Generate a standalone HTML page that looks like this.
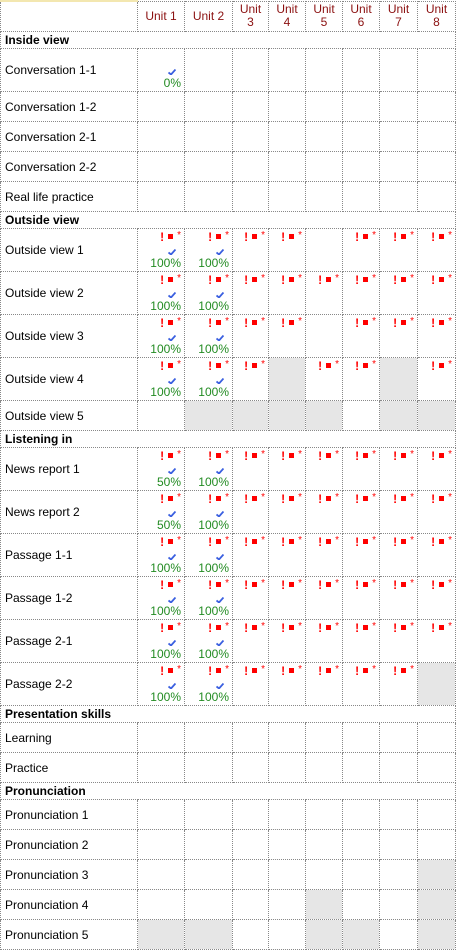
<!DOCTYPE html>
<html><head><meta charset="utf-8"><style>
body{margin:0;background:#fff;font-family:"Liberation Sans",sans-serif;}
table{border-collapse:collapse;table-layout:fixed;width:456px;position:absolute;left:0;top:0;}
td{border:1px dotted #888;padding:0;font-size:12px;color:#000;vertical-align:top;text-align:right;overflow:hidden;}
td.l{text-align:left;padding-left:4px;vertical-align:middle;}
tr.h td{height:29px;color:#8b1010;text-align:center;vertical-align:middle;line-height:13px;}
tr.h td:first-child,tr.s td{border-top:none}
tr.s td{height:16px;line-height:16px;font-weight:bold;text-align:left;padding-left:4px;vertical-align:middle;}
tr.b td{height:42px}
tr.t td{height:29px}
td.g{background:#e6e6e6}
.i{color:#f00;font-size:12px;height:13px;line-height:13px;padding-right:3px;padding-top:2px;font-weight:bold;overflow:hidden}
.i b{display:inline-block;width:5px;height:5px;background:#f00;margin:0 4px 0 4px;vertical-align:2px}
.i s{text-decoration:none;font-size:10px;line-height:10px;vertical-align:3px;font-weight:normal}
.k{height:12px;line-height:12px;padding-right:8px;padding-top:1px;overflow:hidden}
.p{color:#228b22;height:13px;line-height:13px;padding-right:3px}
</style></head><body>
<table>
<colgroup><col style="width:137px"><col style="width:47px"><col style="width:48px"><col style="width:36px"><col style="width:37px"><col style="width:37px"><col style="width:37px"><col style="width:38px"><col style="width:38px"></colgroup>
<tr class="h"><td style="border-top:2px solid #f3e7b0"></td><td>Unit 1</td><td>Unit 2</td><td>Unit<br>3</td><td>Unit<br>4</td><td>Unit<br>5</td><td>Unit<br>6</td><td>Unit<br>7</td><td>Unit<br>8</td></tr>
<tr class="s"><td colspan="9">Inside view</td></tr>
<tr class="b"><td class="l">Conversation 1-1</td><td><div style="height:15px"></div><div class="k"><svg width="8" height="6"><path d="M0.5 3.5L3 5.5L7.5 0.5" stroke="#3a5fe0" stroke-width="1.8" fill="none"/></svg></div><div class="p">0%</div></td><td></td><td></td><td></td><td></td><td></td><td></td><td></td></tr>
<tr class="t"><td class="l">Conversation 1-2</td><td></td><td></td><td></td><td></td><td></td><td></td><td></td><td></td></tr>
<tr class="t"><td class="l">Conversation 2-1</td><td></td><td></td><td></td><td></td><td></td><td></td><td></td><td></td></tr>
<tr class="t"><td class="l">Conversation 2-2</td><td></td><td></td><td></td><td></td><td></td><td></td><td></td><td></td></tr>
<tr class="t"><td class="l">Real life practice</td><td></td><td></td><td></td><td></td><td></td><td></td><td></td><td></td></tr>
<tr class="s"><td colspan="9">Outside view</td></tr>
<tr class="b"><td class="l">Outside view 1</td>
<td><div class="i">!<b></b><s>*</s></div><div class="k"><svg width="8" height="6"><path d="M0.5 3.5L3 5.5L7.5 0.5" stroke="#3a5fe0" stroke-width="1.8" fill="none"/></svg></div><div class="p">100%</div></td>
<td><div class="i">!<b></b><s>*</s></div><div class="k"><svg width="8" height="6"><path d="M0.5 3.5L3 5.5L7.5 0.5" stroke="#3a5fe0" stroke-width="1.8" fill="none"/></svg></div><div class="p">100%</div></td>
<td><div class="i">!<b></b><s>*</s></div></td><td><div class="i">!<b></b><s>*</s></div></td><td></td><td><div class="i">!<b></b><s>*</s></div></td><td><div class="i">!<b></b><s>*</s></div></td><td><div class="i">!<b></b><s>*</s></div></td></tr>
<tr class="b"><td class="l">Outside view 2</td>
<td><div class="i">!<b></b><s>*</s></div><div class="k"><svg width="8" height="6"><path d="M0.5 3.5L3 5.5L7.5 0.5" stroke="#3a5fe0" stroke-width="1.8" fill="none"/></svg></div><div class="p">100%</div></td>
<td><div class="i">!<b></b><s>*</s></div><div class="k"><svg width="8" height="6"><path d="M0.5 3.5L3 5.5L7.5 0.5" stroke="#3a5fe0" stroke-width="1.8" fill="none"/></svg></div><div class="p">100%</div></td>
<td><div class="i">!<b></b><s>*</s></div></td><td><div class="i">!<b></b><s>*</s></div></td><td><div class="i">!<b></b><s>*</s></div></td><td><div class="i">!<b></b><s>*</s></div></td><td><div class="i">!<b></b><s>*</s></div></td><td><div class="i">!<b></b><s>*</s></div></td></tr>
<tr class="b"><td class="l">Outside view 3</td>
<td><div class="i">!<b></b><s>*</s></div><div class="k"><svg width="8" height="6"><path d="M0.5 3.5L3 5.5L7.5 0.5" stroke="#3a5fe0" stroke-width="1.8" fill="none"/></svg></div><div class="p">100%</div></td>
<td><div class="i">!<b></b><s>*</s></div><div class="k"><svg width="8" height="6"><path d="M0.5 3.5L3 5.5L7.5 0.5" stroke="#3a5fe0" stroke-width="1.8" fill="none"/></svg></div><div class="p">100%</div></td>
<td><div class="i">!<b></b><s>*</s></div></td><td><div class="i">!<b></b><s>*</s></div></td><td></td><td><div class="i">!<b></b><s>*</s></div></td><td><div class="i">!<b></b><s>*</s></div></td><td><div class="i">!<b></b><s>*</s></div></td></tr>
<tr class="b"><td class="l">Outside view 4</td>
<td><div class="i">!<b></b><s>*</s></div><div class="k"><svg width="8" height="6"><path d="M0.5 3.5L3 5.5L7.5 0.5" stroke="#3a5fe0" stroke-width="1.8" fill="none"/></svg></div><div class="p">100%</div></td>
<td><div class="i">!<b></b><s>*</s></div><div class="k"><svg width="8" height="6"><path d="M0.5 3.5L3 5.5L7.5 0.5" stroke="#3a5fe0" stroke-width="1.8" fill="none"/></svg></div><div class="p">100%</div></td>
<td><div class="i">!<b></b><s>*</s></div></td><td class="g"></td><td><div class="i">!<b></b><s>*</s></div></td><td><div class="i">!<b></b><s>*</s></div></td><td class="g"></td><td><div class="i">!<b></b><s>*</s></div></td></tr>
<tr class="t"><td class="l">Outside view 5</td><td></td><td class="g"></td><td class="g"></td><td class="g"></td><td class="g"></td><td></td><td class="g"></td><td class="g"></td></tr>
<tr class="s"><td colspan="9">Listening in</td></tr>
<tr class="b"><td class="l">News report 1</td>
<td><div class="i">!<b></b><s>*</s></div><div class="k"><svg width="8" height="6"><path d="M0.5 3.5L3 5.5L7.5 0.5" stroke="#3a5fe0" stroke-width="1.8" fill="none"/></svg></div><div class="p">50%</div></td>
<td><div class="i">!<b></b><s>*</s></div><div class="k"><svg width="8" height="6"><path d="M0.5 3.5L3 5.5L7.5 0.5" stroke="#3a5fe0" stroke-width="1.8" fill="none"/></svg></div><div class="p">100%</div></td>
<td><div class="i">!<b></b><s>*</s></div></td><td><div class="i">!<b></b><s>*</s></div></td><td><div class="i">!<b></b><s>*</s></div></td><td><div class="i">!<b></b><s>*</s></div></td><td><div class="i">!<b></b><s>*</s></div></td><td><div class="i">!<b></b><s>*</s></div></td></tr>
<tr class="b"><td class="l">News report 2</td>
<td><div class="i">!<b></b><s>*</s></div><div class="k"><svg width="8" height="6"><path d="M0.5 3.5L3 5.5L7.5 0.5" stroke="#3a5fe0" stroke-width="1.8" fill="none"/></svg></div><div class="p">50%</div></td>
<td><div class="i">!<b></b><s>*</s></div><div class="k"><svg width="8" height="6"><path d="M0.5 3.5L3 5.5L7.5 0.5" stroke="#3a5fe0" stroke-width="1.8" fill="none"/></svg></div><div class="p">100%</div></td>
<td><div class="i">!<b></b><s>*</s></div></td><td><div class="i">!<b></b><s>*</s></div></td><td><div class="i">!<b></b><s>*</s></div></td><td><div class="i">!<b></b><s>*</s></div></td><td><div class="i">!<b></b><s>*</s></div></td><td><div class="i">!<b></b><s>*</s></div></td></tr>
<tr class="b"><td class="l">Passage 1-1</td>
<td><div class="i">!<b></b><s>*</s></div><div class="k"><svg width="8" height="6"><path d="M0.5 3.5L3 5.5L7.5 0.5" stroke="#3a5fe0" stroke-width="1.8" fill="none"/></svg></div><div class="p">100%</div></td>
<td><div class="i">!<b></b><s>*</s></div><div class="k"><svg width="8" height="6"><path d="M0.5 3.5L3 5.5L7.5 0.5" stroke="#3a5fe0" stroke-width="1.8" fill="none"/></svg></div><div class="p">100%</div></td>
<td><div class="i">!<b></b><s>*</s></div></td><td><div class="i">!<b></b><s>*</s></div></td><td><div class="i">!<b></b><s>*</s></div></td><td><div class="i">!<b></b><s>*</s></div></td><td><div class="i">!<b></b><s>*</s></div></td><td><div class="i">!<b></b><s>*</s></div></td></tr>
<tr class="b"><td class="l">Passage 1-2</td>
<td><div class="i">!<b></b><s>*</s></div><div class="k"><svg width="8" height="6"><path d="M0.5 3.5L3 5.5L7.5 0.5" stroke="#3a5fe0" stroke-width="1.8" fill="none"/></svg></div><div class="p">100%</div></td>
<td><div class="i">!<b></b><s>*</s></div><div class="k"><svg width="8" height="6"><path d="M0.5 3.5L3 5.5L7.5 0.5" stroke="#3a5fe0" stroke-width="1.8" fill="none"/></svg></div><div class="p">100%</div></td>
<td><div class="i">!<b></b><s>*</s></div></td><td><div class="i">!<b></b><s>*</s></div></td><td><div class="i">!<b></b><s>*</s></div></td><td><div class="i">!<b></b><s>*</s></div></td><td><div class="i">!<b></b><s>*</s></div></td><td><div class="i">!<b></b><s>*</s></div></td></tr>
<tr class="b"><td class="l">Passage 2-1</td>
<td><div class="i">!<b></b><s>*</s></div><div class="k"><svg width="8" height="6"><path d="M0.5 3.5L3 5.5L7.5 0.5" stroke="#3a5fe0" stroke-width="1.8" fill="none"/></svg></div><div class="p">100%</div></td>
<td><div class="i">!<b></b><s>*</s></div><div class="k"><svg width="8" height="6"><path d="M0.5 3.5L3 5.5L7.5 0.5" stroke="#3a5fe0" stroke-width="1.8" fill="none"/></svg></div><div class="p">100%</div></td>
<td><div class="i">!<b></b><s>*</s></div></td><td><div class="i">!<b></b><s>*</s></div></td><td><div class="i">!<b></b><s>*</s></div></td><td><div class="i">!<b></b><s>*</s></div></td><td><div class="i">!<b></b><s>*</s></div></td><td><div class="i">!<b></b><s>*</s></div></td></tr>
<tr class="b"><td class="l">Passage 2-2</td>
<td><div class="i">!<b></b><s>*</s></div><div class="k"><svg width="8" height="6"><path d="M0.5 3.5L3 5.5L7.5 0.5" stroke="#3a5fe0" stroke-width="1.8" fill="none"/></svg></div><div class="p">100%</div></td>
<td><div class="i">!<b></b><s>*</s></div><div class="k"><svg width="8" height="6"><path d="M0.5 3.5L3 5.5L7.5 0.5" stroke="#3a5fe0" stroke-width="1.8" fill="none"/></svg></div><div class="p">100%</div></td>
<td><div class="i">!<b></b><s>*</s></div></td><td><div class="i">!<b></b><s>*</s></div></td><td><div class="i">!<b></b><s>*</s></div></td><td><div class="i">!<b></b><s>*</s></div></td><td><div class="i">!<b></b><s>*</s></div></td><td class="g"></td></tr>
<tr class="s"><td colspan="9">Presentation skills</td></tr>
<tr class="t"><td class="l">Learning</td><td></td><td></td><td></td><td></td><td></td><td></td><td></td><td></td></tr>
<tr class="t"><td class="l">Practice</td><td></td><td></td><td></td><td></td><td></td><td></td><td></td><td></td></tr>
<tr class="s"><td colspan="9">Pronunciation</td></tr>
<tr class="t"><td class="l">Pronunciation 1</td><td></td><td></td><td></td><td></td><td></td><td></td><td></td><td></td></tr>
<tr class="t"><td class="l">Pronunciation 2</td><td></td><td></td><td></td><td></td><td></td><td></td><td></td><td></td></tr>
<tr class="t"><td class="l">Pronunciation 3</td><td></td><td></td><td></td><td></td><td></td><td></td><td></td><td class="g"></td></tr>
<tr class="t"><td class="l">Pronunciation 4</td><td></td><td></td><td></td><td></td><td class="g"></td><td></td><td></td><td class="g"></td></tr>
<tr class="t"><td class="l">Pronunciation 5</td><td class="g"></td><td class="g"></td><td></td><td></td><td class="g"></td><td class="g"></td><td></td><td class="g"></td></tr>
</table>
</body></html>
